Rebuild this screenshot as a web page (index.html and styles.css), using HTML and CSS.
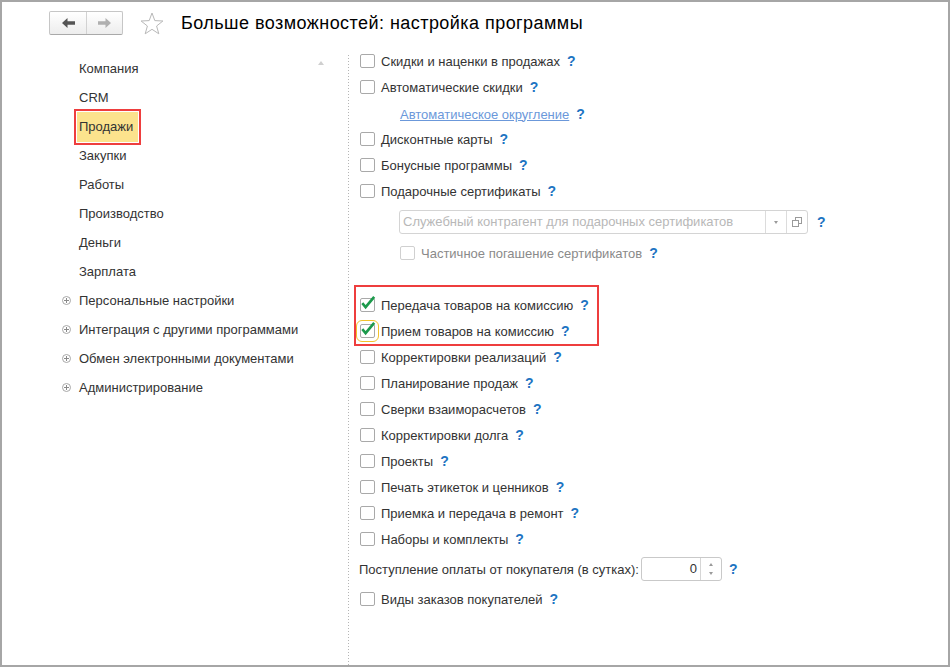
FILE: index.html
```html
<!DOCTYPE html>
<html lang="ru">
<head>
    <meta charset="UTF-8">
    <title>Больше возможностей: настройка программы</title>
    <link rel="stylesheet" href="styles.css">
</head>
<body>
<div class="window">
    <div class="toolbar">
        <div class="nav-buttons">
            <span class="nav-btn">
                <svg width="13" height="10" viewBox="0 0 13 10"><path d="M0 5 L5.5 0 L5.5 3.3 L13 3.3 L13 6.7 L5.5 6.7 L5.5 10 Z" fill="#555"/></svg>
            </span>
            <span class="nav-btn next">
                <svg width="13" height="10" viewBox="0 0 13 10"><path d="M13 5 L7.5 0 L7.5 3.3 L0 3.3 L0 6.7 L7.5 6.7 L7.5 10 Z" fill="#b0b0b0"/></svg>
            </span>
        </div>
        <svg class="star" width="24" height="23" viewBox="0 0 24 23">
            <polygon points="12,1 14.8,8.6 22.9,9 16.6,14 18.8,21.8 12,17.3 5.2,21.8 7.4,14 1.1,9 9.2,8.6" fill="none" stroke="#b8b8b8" stroke-width="1"/>
        </svg>
        <h1 class="title">Больше возможностей: настройка программы</h1>
    </div>

    <div class="content">
        <div class="sections">
            <span class="scroll-up"></span>
            <ul class="section-list">
                <li>Компания</li>
                <li>CRM</li>
                <li><span class="current">Продажи</span></li>
                <li>Закупки</li>
                <li>Работы</li>
                <li>Производство</li>
                <li>Деньги</li>
                <li>Зарплата</li>
                <li><span class="exp"></span>Персональные настройки</li>
                <li><span class="exp"></span>Интеграция с другими программами</li>
                <li><span class="exp"></span>Обмен электронными документами</li>
                <li><span class="exp"></span>Администрирование</li>
            </ul>
        </div>

        <div class="divider"></div>

        <div class="settings">
            <div class="opt"><span class="cb"></span>Скидки и наценки в продажах<span class="help">?</span></div>
            <div class="opt"><span class="cb"></span>Автоматические скидки<span class="help">?</span></div>
            <div class="opt link-row"><a class="link" href="#">Автоматическое округление</a><span class="help">?</span></div>
            <div class="opt"><span class="cb"></span>Дисконтные карты<span class="help">?</span></div>
            <div class="opt"><span class="cb"></span>Бонусные программы<span class="help">?</span></div>
            <div class="opt"><span class="cb"></span>Подарочные сертификаты<span class="help">?</span></div>
            <div class="opt select-row">
                <div class="select">
                    <span class="value">Служебный контрагент для подарочных сертификатов</span>
                    <span class="sel-btn"><span class="tri-down"></span></span>
                    <span class="sel-btn">
                        <svg width="10" height="10" viewBox="0 0 10 10"><rect x="3.5" y="0.5" width="6" height="6" fill="#fff" stroke="#9a9a9a"/><rect x="0.5" y="3.5" width="6" height="6" fill="#fff" stroke="#9a9a9a"/></svg>
                    </span>
                </div>
                <span class="help">?</span>
            </div>
            <div class="opt sub-opt"><span class="cb disabled"></span><span class="muted">Частичное погашение сертификатов</span><span class="help">?</span></div>
            <div class="spacer"></div>

            <div class="mark-group">
                <div class="opt"><span class="cb checked"><svg width="17" height="17" viewBox="0 0 17 17"><path d="M2.3 9.2 L5.6 13.2 L14.2 2.8" fill="none" stroke="#1c9a4c" stroke-width="2.6"/></svg></span>Передача товаров на комиссию<span class="help">?</span></div>
                <div class="opt"><span class="cb checked focus"><svg width="17" height="17" viewBox="0 0 17 17"><path d="M2.3 9.2 L5.6 13.2 L14.2 2.8" fill="none" stroke="#1c9a4c" stroke-width="2.6"/></svg></span>Прием товаров на комиссию<span class="help">?</span></div>
            </div>

            <div class="opt"><span class="cb"></span>Корректировки реализаций<span class="help">?</span></div>
            <div class="opt"><span class="cb"></span>Планирование продаж<span class="help">?</span></div>
            <div class="opt"><span class="cb"></span>Сверки взаиморасчетов<span class="help">?</span></div>
            <div class="opt"><span class="cb"></span>Корректировки долга<span class="help">?</span></div>
            <div class="opt"><span class="cb"></span>Проекты<span class="help">?</span></div>
            <div class="opt"><span class="cb"></span>Печать этикеток и ценников<span class="help">?</span></div>
            <div class="opt"><span class="cb"></span>Приемка и передача в ремонт<span class="help">?</span></div>
            <div class="opt"><span class="cb"></span>Наборы и комплекты<span class="help">?</span></div>
            <div class="opt num-row">
                <span class="num-label">Поступление оплаты от покупателя (в сутках):</span>
                <div class="num">
                    <span class="val">0</span>
                    <span class="spin"><span class="tri-up"></span><span class="tri-down"></span></span>
                </div>
                <span class="help">?</span>
            </div>
            <div class="opt"><span class="cb"></span>Виды заказов покупателей<span class="help">?</span></div>
        </div>
    </div>
</div>
</body>
</html>
```

FILE: styles.css
```css
* {
    box-sizing: border-box;
}
body {
    margin: 0;
    font-family: "Liberation Sans", Arial, sans-serif;
    font-size: 13px;
    color: #333;
    background-color: #fff;
}
.window {
    width: 950px;
    height: 667px;
    border: 2px solid #a6a6a6;
    display: flex;
    flex-direction: column;
    overflow: hidden;
}

/* top bar */
.toolbar {
    height: 46px;
    display: flex;
    align-items: flex-start;
    padding: 9px 0 0 47px;
}
.nav-buttons {
    display: flex;
    height: 24px;
    border: 1px solid #c6c6c6;
    border-bottom-color: #a9a9a9;
    border-radius: 2px;
    background: linear-gradient(#fff, #ededed);
}
.nav-btn {
    width: 36px;
    display: flex;
    align-items: center;
    justify-content: center;
}
.nav-btn.next {
    border-left: 1px solid #d2d2d2;
}
.star {
    margin: 1px 0 0 17px;
}
.title {
    margin: 0 0 0 17px;
    font-size: 18px;
    letter-spacing: 0.45px;
    font-weight: normal;
    line-height: 24px;
    color: #000;
}

.content {
    flex: 1;
    display: flex;
    min-height: 0;
}

/* left column */
.sections {
    width: 346px;
    padding-top: 6px;
    position: relative;
}
.scroll-up {
    position: absolute;
    top: 13px;
    left: 316px;
    border-left: 3.5px solid transparent;
    border-right: 3.5px solid transparent;
    border-bottom: 4px solid #cfcfcf;
}
.section-list {
    list-style: none;
    margin: 0;
    padding: 0;
}
.section-list li {
    height: 29px;
    display: flex;
    align-items: center;
    padding-left: 77px;
}
.section-list .exp {
    width: 9px;
    height: 9px;
    margin-left: -17px;
    margin-right: 8px;
    border: 1px solid #a8a8a8;
    border-radius: 50%;
    background:
        linear-gradient(#8a8a8a, #8a8a8a) center / 5px 1px no-repeat,
        linear-gradient(#8a8a8a, #8a8a8a) center / 1px 5px no-repeat;
}
.section-list .current {
    display: inline-block;
    line-height: 30px;
    padding: 0 5px 0 2px;
    margin: 0 0 0 -2px;
    background-color: #fce38d;
    box-shadow: 0 0 0 1px #fff, 0 0 0 3px #ee3e3e;
}

.divider {
    width: 1px;
    margin-top: 7px;
    background: repeating-linear-gradient(to bottom, #b5b5b5 0 1px, transparent 1px 3px);
}

/* right column */
.settings {
    flex: 1;
    padding-left: 11px;
}
.opt {
    height: 26px;
    display: flex;
    align-items: center;
    white-space: nowrap;
}
.cb {
    width: 15px;
    height: 14px;
    flex: none;
    margin-right: 6px;
    border: 1px solid #a9a9a9;
    border-radius: 2px;
    background-color: #fff;
    position: relative;
}
.cb svg {
    position: absolute;
    left: -1px;
    top: -5px;
}
.cb.disabled {
    border-color: #d0d0d0;
}
.cb.focus {
    outline: 1px solid #f2c22c;
    outline-offset: 3px;
}
.help {
    margin-left: 7px;
    font-size: 14px;
    font-weight: bold;
    color: #1d74c2;
}
.link-row {
    padding-left: 40px;
    padding-top: 2px;
}
.link {
    color: #6b98da;
    text-decoration: underline;
}
.muted {
    color: #8a8a8a;
}
.sub-opt {
    padding-left: 40px;
}
.spacer {
    height: 26px;
}

.select-row {
    height: 36px;
    padding-left: 39px;
}
.select {
    width: 409px;
    height: 24px;
    display: flex;
    border: 1px solid #d4d4d4;
    border-radius: 3px;
}
.select .value {
    flex: 1;
    padding-left: 3px;
    line-height: 22px;
    color: #b8b8b8;
}
.select .sel-btn {
    width: 21px;
    border-left: 1px solid #dcdcdc;
    display: flex;
    align-items: center;
    justify-content: center;
}
.select-row .help {
    margin-left: 9px;
}
.tri-down {
    border-left: 2.5px solid transparent;
    border-right: 2.5px solid transparent;
    border-top: 3px solid #9a9a9a;
}
.tri-up {
    border-left: 2.5px solid transparent;
    border-right: 2.5px solid transparent;
    border-bottom: 3px solid #9a9a9a;
}

.mark-group {
    width: 245px;
    border: 2px solid #ee3e3e;
    margin: -7px 0 -2px -6px;
    padding: 5px 0 0 4px;
}

.num-row {
    height: 34px;
}
.num-label {
    margin-left: -1px;
}
.num {
    width: 81px;
    height: 24px;
    margin-left: 2px;
    display: flex;
    border: 1px solid #c9c9c9;
    border-radius: 3px;
}
.num .val {
    flex: 1;
    text-align: right;
    padding-right: 3px;
    line-height: 22px;
}
.num .spin {
    width: 21px;
    border-left: 1px solid #d6d6d6;
    display: flex;
    flex-direction: column;
    align-items: center;
    justify-content: center;
    gap: 6px;
}
```
